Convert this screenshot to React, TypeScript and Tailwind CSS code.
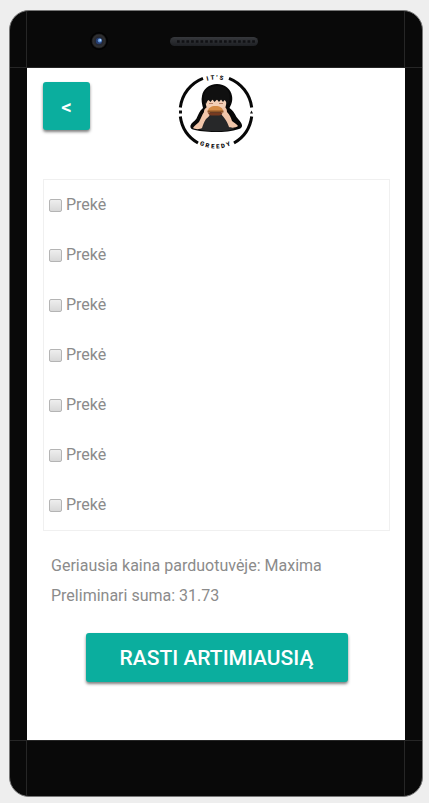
import React from "react";

const items = ["Prekė", "Prekė", "Prekė", "Prekė", "Prekė", "Prekė", "Prekė"];

const buttonStyle =
  "flex items-center justify-center rounded-[3px] bg-[#0bae9e] text-[21px] font-medium text-white shadow-[0_2px_3px_rgba(0,0,0,0.5)]";

function Logo() {
  return (
    <svg viewBox="0 0 76 76" className="size-[76px] overflow-visible" role="img" aria-label="It's Greedy">
      <defs>
        <path id="logo-top" d="M5.500 38a32.500 32.500 0 0 1 65 0" />
        <path id="logo-bottom" d="M1.500 38a36.500 36.500 0 0 0 73 0" />
      </defs>
      <g fill="none" stroke="#080808" strokeWidth="3">
        <path d="M2.300 33.500A36 36 0 0 1 25 4.300" />
        <path d="M51 4.300A36 36 0 0 1 73.700 33.500" />
        <path d="M2.300 42.500A36 36 0 0 0 20 69" />
        <path d="M73.700 42.500A36 36 0 0 1 56 69" />
      </g>
      <path d="M1 36.500h3v3H1zM72 39.500l1.500-3 1.500 3z" fill="#111" />
      <g fill="#080808" fontFamily="Roboto, sans-serif" fontWeight="900" fontSize="6" letterSpacing="2" textAnchor="middle">
        <text>
          <textPath href="#logo-top" startOffset="50%">IT'S</textPath>
        </text>
        <text>
          <textPath href="#logo-bottom" startOffset="50%">GREEDY</textPath>
        </text>
      </g>
      <path
        d="M25 34c-1-4-2-8-1-12 1-7 7-12 15-12s14 5 15 12c1 5-1 9-2.500 12 3 2 5 5 7 9 2 3 5 5 5.500 8 .3 2-1 3.500-3 4-7 2.500-15 3-24 3s-17-1-22-2.500c-2-.5-3-2-2.500-4 1-3 4-4 6-7 2-4 3-8 6.500-10.500z"
        fill="#080808"
      />
      <path d="M28 24c6 2 15 2 20 0 1 4 0 9-2 13H30c-2-4-3-9-2-13z" fill="#f3cfb6" />
      <path d="M26 27c-1-10 4-15 13-15s14 5 12.500 15l-2 3c-1-2-2-3-3-4l-1.500 2-2-2.500-2 2.500-2-2.500-2.500 2.500-2-2.500-2 2.500-2-2c-1.500 1-1.500 2-2.500 4z" fill="#101010" />
      <path d="M31 29.500h4M41 29.500h4" stroke="#b58068" strokeWidth="1" />
      <path d="M28 37h20c4 5 6 11 8 18-9 3-27 3-36 0 2-7 4-13 8-18z" fill="#272829" />
      <path
        d="M31 33c-3 0-5 2-5 5-2 3-3 6-5 10-2 2-5 4-6 6 2 1.500 7 1.500 9 0 1-3 2-6 4-9 2-2 4-3 4-6zM45 33c3 0 4 2 4 5 3 3 4 6 5 9 2 2 5 3 6 5-2 2-7 2-9 1-1-3-2-5-4-8s-4-4-4-7z"
        fill="#f1c6aa"
      />
      <path d="M30 37c0-3 3-5 7.500-5s7.500 2 7.500 5z" fill="#d48b45" />
      <path d="M29.500 36.500h16v2h-16z" fill="#8f5728" />
      <path d="M30 38.500h14.500c0 1.500-1.500 3-3.500 3h-7.500c-2 0-3.500-1.500-3.500-3z" fill="#773a20" />
    </svg>
  );
}

function Speaker() {
  return (
    <svg viewBox="0 0 88 9" className="h-[9px] w-[88px]" aria-hidden="true">
      <defs>
        <linearGradient id="grille" x1="0" y1="0" x2="0" y2="1">
          <stop stopColor="#36383c" />
          <stop offset="1" stopColor="#1e2024" />
        </linearGradient>
      </defs>
      <rect width="88" height="9" rx="4.500" fill="url(#grille)" />
      <path d="M7 4.500h78" stroke="#101114" strokeWidth="2.500" strokeDasharray="2.700 2" />
    </svg>
  );
}

function Camera() {
  return (
    <svg viewBox="0 0 18 18" className="size-[18px]" aria-hidden="true">
      <defs>
        <radialGradient id="lens">
          <stop stopColor="#27354f" />
          <stop offset="0.4" stopColor="#20232c" />
          <stop offset="0.8" stopColor="#303032" />
          <stop offset="1" stopColor="#101010" />
        </radialGradient>
      </defs>
      <circle cx="9" cy="9" r="9" fill="#020202" />
      <circle cx="9" cy="9" r="7.500" fill="url(#lens)" />
      <circle cx="9" cy="9" r="3.200" fill="#263d70" />
      <circle cx="9.800" cy="8.500" r="2" fill="#669bdc" />
      <circle cx="10.300" cy="8" r="0.900" fill="#b8d9ff" />
    </svg>
  );
}

export default function App() {
  return (
    <div className="min-h-screen bg-[#eeeeee] pt-2.5 pr-1.5 pb-1.5 pl-[9px] font-[Roboto,sans-serif]">
      <div className="overflow-hidden rounded-[20px] border border-[#777777] bg-[#090909]">
        <div className="flex h-[57px] border-b border-[#262626] pr-[17px] pl-4">
          <div className="flex grow items-center border-x border-[#262626] pt-1 pl-[63px]">
            <Camera />
            <div className="ml-[62px] flex">
              <Speaker />
            </div>
          </div>
        </div>

        <div className="mr-[17px] ml-[17px]">
          <main className="bg-white pt-1.5 pr-[15px] pb-[58px] pl-4 text-[#8b8b8b]">
            <header className="grid grid-cols-[1fr_auto_1fr] items-start pr-0.5">
              <button type="button" className={`${buttonStyle} mt-2 h-12 w-[47px] pt-1`}>
                &lt;
              </button>
              <Logo />
            </header>

            <ul className="mt-[29px] border border-[#f0f0f0]">
              {items.map((name, i) => (
                <li key={i} className="flex h-[50px] items-center pl-[5px]">
                  <label className="flex items-center gap-1 text-base">
                    <input
                      type="checkbox"
                      className="size-[13px] appearance-none rounded-[2px] border border-[#b4b4b4] bg-linear-to-b from-[#eeeeee] to-[#d8d8d8] checked:from-[#0bae9e] checked:to-[#0bae9e]"
                    />
                    {name}
                  </label>
                </li>
              ))}
            </ul>

            <div className="mt-5 pl-2 text-base leading-[30px]">
              <p>Geriausia kaina parduotuvėje: Maxima</p>
              <p>Preliminari suma: 31.73</p>
            </div>

            <button type="button" className={`${buttonStyle} mx-auto mt-[22px] h-[49px] w-[262px] pt-0.5`}>
              RASTI ARTIMIAUSIĄ
            </button>
          </main>
        </div>

        <div className="flex h-14 border-t border-[#262626] pr-[17px] pl-4">
          <div className="grow border-x border-[#262626]" />
        </div>
      </div>
    </div>
  );
}
